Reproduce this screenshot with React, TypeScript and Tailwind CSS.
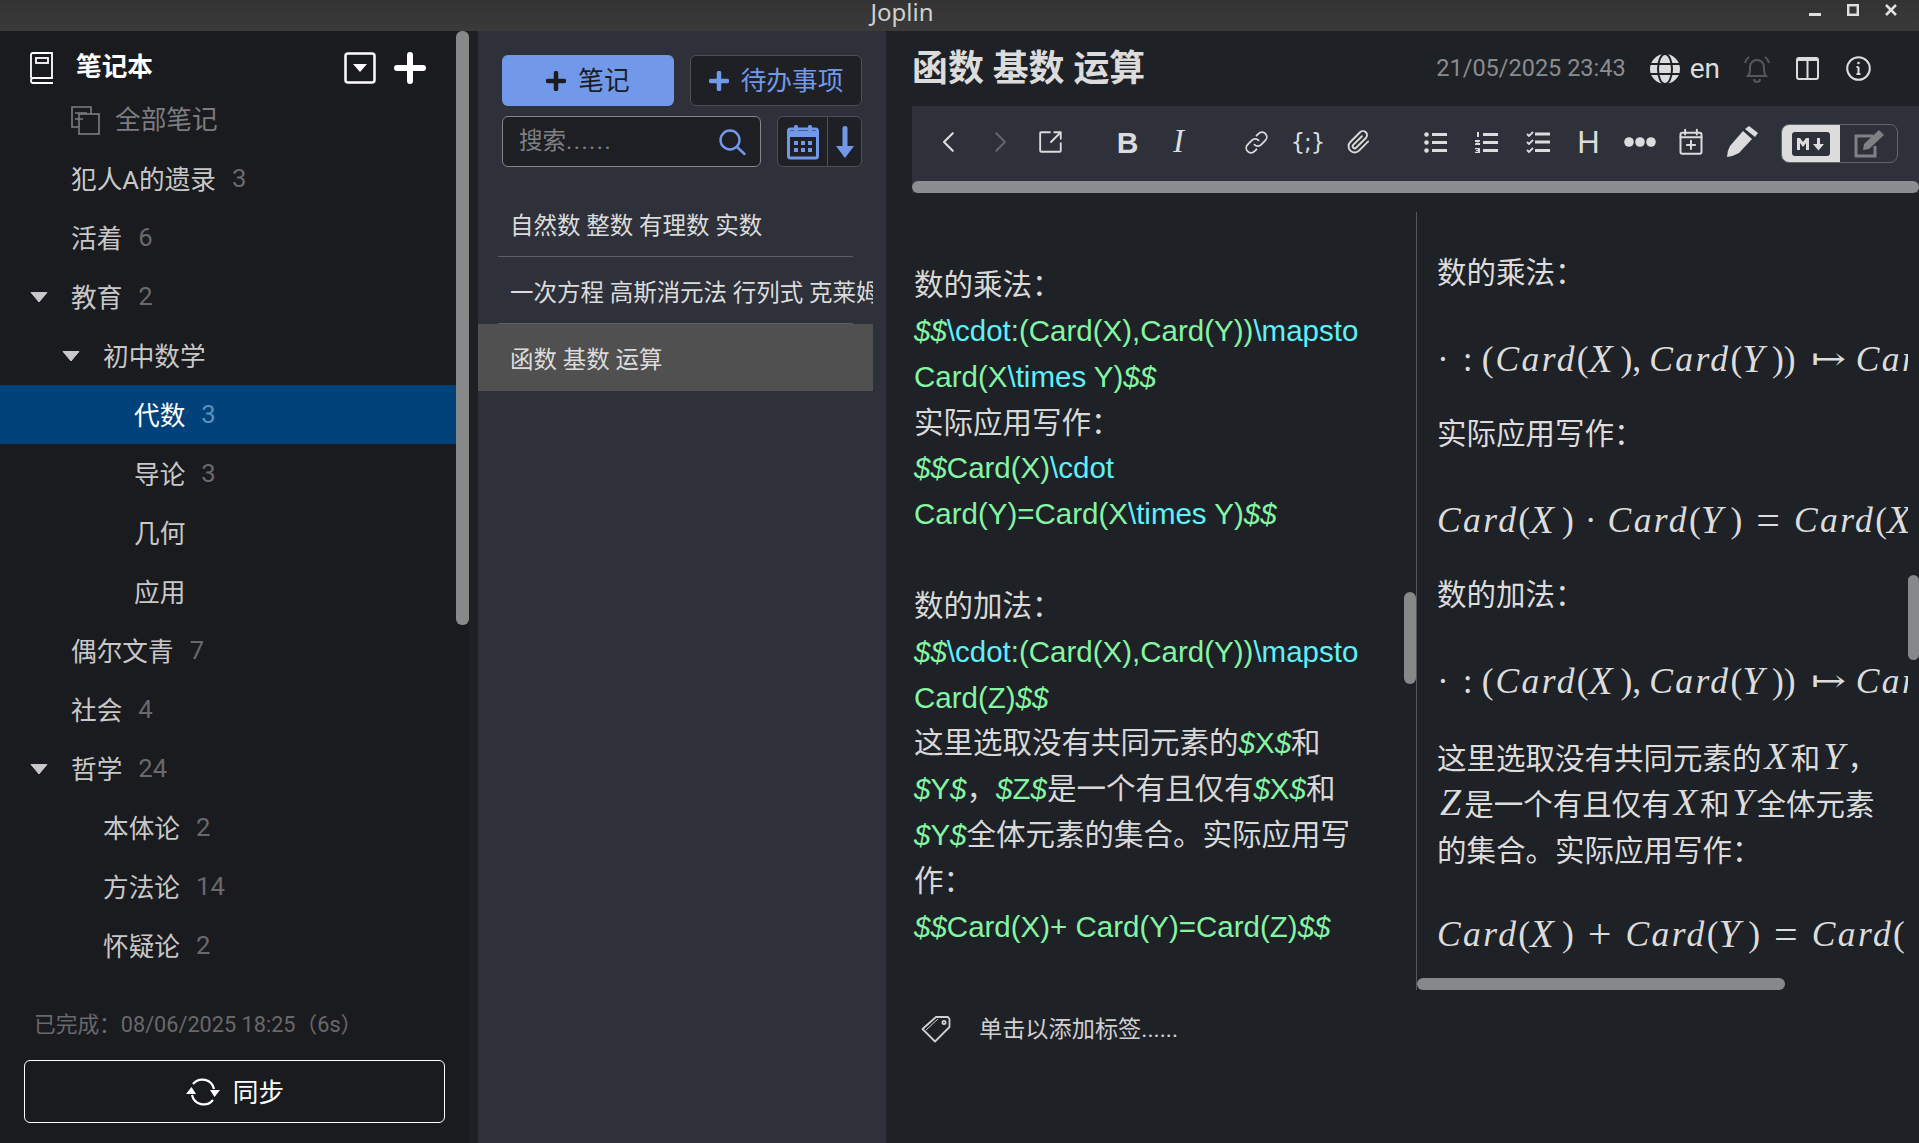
import type { ReactNode } from "react";

const folders = [
  { name: "犯人A的遗录", count: "3", pad: "pl-[30px]" },
  { name: "活着", count: "6", pad: "pl-[30px]" },
  { name: "教育", count: "2", pad: "pl-[30px]", open: true },
  { name: "初中数学", pad: "pl-[62px]", open: true },
  { name: "代数", count: "3", pad: "pl-[93px]", selected: true },
  { name: "导论", count: "3", pad: "pl-[93px]" },
  { name: "几何", pad: "pl-[93px]" },
  { name: "应用", pad: "pl-[93px]" },
  { name: "偶尔文青", count: "7", pad: "pl-[30px]" },
  { name: "社会", count: "4", pad: "pl-[30px]" },
  { name: "哲学", count: "24", pad: "pl-[30px]", open: true },
  { name: "本体论", count: "2", pad: "pl-[62px]" },
  { name: "方法论", count: "14", pad: "pl-[62px]" },
  { name: "怀疑论", count: "2", pad: "pl-[62px]" },
];

function Caret() {
  return (
    <svg width="18" height="12" viewBox="0 0 18 12" className="text-[#c8c8c8]">
      <path d="M1 1.500h16L9 11z" fill="currentColor" stroke="currentColor" strokeLinejoin="round" />
    </svg>
  );
}

function Icon({ children, size = 26, vb = 24 }: { children: ReactNode; size?: number; vb?: number }) {
  return (
    <svg
      width={size}
      height={size}
      viewBox={`0 0 ${vb} ${vb}`}
      fill="none"
      stroke="currentColor"
      strokeWidth="1.7"
      strokeLinecap="round"
      strokeLinejoin="round"
    >
      {children}
    </svg>
  );
}

function ToolBtn({ children, dim }: { children: ReactNode; dim?: boolean }) {
  return (
    <div className={`flex h-[51px] w-[51px] items-center justify-center ${dim ? "text-[#62646a]" : "text-[#dcdcdc]"}`}>
      {children}
    </div>
  );
}

function Sidebar() {
  return (
    <div className="relative flex h-full w-[478px] shrink-0 flex-col bg-[#1a1b1f]">
      <div className="absolute right-[9px] top-0 h-[594px] w-[13px] rounded-[6px] bg-[#87888a]" />
      <div className="absolute right-0 top-0 h-full w-[9px] bg-[#1e2024]" />
      <div className="flex h-[59px] items-center pl-[30px] pr-[52px] pt-[14px] text-white">
        <svg width="24" height="32" viewBox="0 0 24 32" fill="none" stroke="currentColor" strokeWidth="1.8">
          <path d="M1 26V3q0-2 2-2h19v25H3q-2 0-2 2.500T3 31h20" />
          <rect x="6" y="6" width="12" height="5" />
        </svg>
        <span className="ml-[22px] text-[25.67px] font-bold">笔记本</span>
        <div className="ml-auto flex items-center gap-[18px]">
          <svg width="32" height="32" viewBox="0 0 32 32" fill="none">
            <rect x="1.500" y="1.500" width="29" height="29" rx="2.500" stroke="currentColor" strokeWidth="2.500" />
            <path d="M9 12h14l-7 8z" fill="currentColor" />
          </svg>
          <svg width="32" height="32" viewBox="0 0 32 32" fill="none" stroke="currentColor" strokeWidth="6" strokeLinecap="round">
            <path d="M16 3v26M3 16h26" />
          </svg>
        </div>
      </div>
      <div className="flex h-[59px] items-center pl-[71px] pt-[2px] text-[#7b7d80]">
        <svg width="29" height="29" viewBox="0 0 29 29" fill="none" stroke="currentColor" strokeWidth="1.600">
          <path d="M20 8V1H1v20h7" />
          <rect x="8" y="8" width="20" height="20" />
          <path d="M4 7h12M4 13h8" />
        </svg>
        <span className="ml-[15px] text-[25.67px]">全部笔记</span>
      </div>
      {folders.map((f) => (
        <div
          key={f.name}
          className={`flex h-[59px] w-[456px] shrink-0 items-center ${f.pad} ${f.selected ? "bg-[#01427b] text-white" : "text-[#c8c8c8]"}`}
        >
          <span className="flex w-[41px] items-center">{f.open && <Caret />}</span>
          <span className="pt-[4px] text-[25.67px]">{f.name}</span>
          {f.count && (
            <span className={`ml-[16px] text-[25.67px] ${f.selected ? "text-[#5d8fbc]" : "text-[#68696c]"}`}>
              {f.count}
            </span>
          )}
        </div>
      ))}
      <div className="mt-auto pb-[20px] pl-[24px]">
        <div className="whitespace-nowrap pl-[10px] text-[21.7px] text-[#68696b]">已完成：08/06/2025 18:25（6s）</div>
        <div className="mt-[18px] flex h-[63px] w-[421px] items-center justify-center gap-[12px] rounded-[6px] border-[1.5px] border-white text-white">
          <svg width="36" height="32" viewBox="0 0 36 32" fill="none" stroke="currentColor" strokeWidth="2.200">
            <path d="M7 19A12 12 0 0 0 28 24M29 13A12 12 0 0 0 8 8" />
            <path d="M1 18l5.500-7 4.500 7zM35 14l-5.500 7-4.500-7z" fill="currentColor" stroke="none" />
          </svg>
          <span className="pt-[3px] text-[25.67px]">同步</span>
        </div>
      </div>
    </div>
  );
}

function NoteList() {
  return (
    <div className="flex h-full w-[408px] shrink-0 flex-col bg-[#2e313a]">
      <div className="ml-[24px] mt-[24px] flex gap-[16px]">
        <div className="flex h-[51px] w-[172px] items-center justify-center gap-[12px] rounded-[6px] bg-[#7299e9] text-[#1b1c20]">
          <svg width="20" height="20" viewBox="0 0 20 20" stroke="currentColor" strokeWidth="4.500" strokeLinecap="round">
            <path d="M10 2v16M2 10h16" />
          </svg>
          <span className="pt-[2px] text-[25.67px]">笔记</span>
        </div>
        <div className="flex h-[51px] w-[172px] items-center justify-center gap-[12px] rounded-[6px] border border-[#4d4f55] bg-[#1e2026] text-[#7299e9]">
          <svg width="20" height="20" viewBox="0 0 20 20" stroke="currentColor" strokeWidth="4.500" strokeLinecap="round">
            <path d="M10 2v16M2 10h16" />
          </svg>
          <span className="pt-[2px] text-[25.67px]">待办事项</span>
        </div>
      </div>
      <div className="ml-[24px] mt-[10px] flex gap-[16px]">
        <div className="flex h-[51px] w-[259px] items-center justify-between rounded-[6px] border border-[#85868a] bg-[#1d1f24] pl-[16px] pr-[14px]">
          <span className="text-[23.5px] text-[#7f8083]">
            搜索<span className="tracking-[1.5px]">......</span>
          </span>
          <svg width="28" height="28" viewBox="0 0 28 28" fill="none" stroke="#7299e9" strokeWidth="2.400" strokeLinecap="round">
            <circle cx="12" cy="12" r="9.500" />
            <path d="M19 19l7.500 7" />
          </svg>
        </div>
        <div className="flex h-[51px] w-[85px] items-center rounded-[6px] border border-[#4d4f55] bg-[#1e2026]">
          <div className="flex h-full w-[50px] items-center justify-center border-r border-[#4d4f55]">
            <svg width="32" height="36" viewBox="0 0 32 36" fill="none">
              <rect x="1.500" y="5" width="29" height="29" rx="2" stroke="#7299e9" strokeWidth="3" />
              <path d="M1.500 7h29v6h-29z" fill="#7299e9" />
              <rect x="7" y="1" width="4" height="8" rx="1.500" fill="#7299e9" />
              <rect x="21" y="1" width="4" height="8" rx="1.500" fill="#7299e9" />
              <path d="M7 17h4v4H7zM14 17h4v4h-4zM21 17h4v4h-4zM7 24h4v4H7zM14 24h4v4h-4zM21 24h4v4h-4z" fill="#7299e9" />
            </svg>
          </div>
          <div className="flex flex-1 items-center justify-center">
            <svg width="18" height="32" viewBox="0 0 18 32" fill="#7299e9">
              <path d="M6.500 2q0-2 2.500-2t2.500 2v18H18l-9 12-9-12h6.500z" />
            </svg>
          </div>
        </div>
      </div>
      <div className="mt-[23px] w-[395px] overflow-hidden text-[23.47px] text-[#dcdcdc]">
        <div className="relative flex h-[67px] items-center whitespace-nowrap pl-[32px] pt-[6px]">
          自然数 整数 有理数 实数
          <div className="absolute bottom-0 left-[20px] h-px w-[355px] bg-[#5c5e63]" />
        </div>
        <div className="relative flex h-[67px] items-center whitespace-nowrap pl-[32px] pt-[6px]">
          一次方程 高斯消元法 行列式 克莱姆法则
          <div className="absolute bottom-0 left-[20px] h-px w-[355px] bg-[#5c5e63]" />
        </div>
        <div className="flex h-[67px] items-center whitespace-nowrap bg-[#505050] pl-[32px] pt-[6px]">函数 基数 运算</div>
      </div>
    </div>
  );
}

function G({ children }: { children: ReactNode }) {
  return <span className="text-[#84f5a2]">{children}</span>;
}
function C({ children }: { children: ReactNode }) {
  return <span className="text-[#5ef0fb]">{children}</span>;
}
function D() {
  return <span className="italic text-[#84f5a2]">$$</span>;
}
function S({ v }: { v: string }) {
  return (
    <span className="text-[#84f5a2]">
      <span className="italic">$</span>
      {v}
      <span className="italic">$</span>
    </span>
  );
}

function MarkdownPane() {
  return (
    <div className="relative h-full w-[504px] shrink-0 overflow-hidden whitespace-nowrap pl-[2px] pt-[50px] font-['Liberation_Sans','Noto_Sans_CJK_SC',sans-serif] text-[29.5px] leading-[45.85px] text-[#d8d8d8]">
      <div>数的乘法：</div>
      <div>
        <D /><C>\cdot</C><G>:(Card(X),Card(Y))</G><C>\mapsto</C>
      </div>
      <div>
        <G>Card(X</G><C>\times</C><G> Y)</G><D />
      </div>
      <div>实际应用写作：</div>
      <div>
        <D /><G>Card(X)</G><C>\cdot</C>
      </div>
      <div>
        <G>Card(Y)=Card(X</G><C>\times</C><G> Y)</G><D />
      </div>
      <div className="h-[45.85px]" />
      <div>数的加法：</div>
      <div>
        <D /><C>\cdot</C><G>:(Card(X),Card(Y))</G><C>\mapsto</C>
      </div>
      <div>
        <G>Card(Z)</G><D />
      </div>
      <div>
        这里选取没有共同元素的<S v="X" />和
      </div>
      <div>
        <S v="Y" />，<S v="Z" />是一个有且仅有<S v="X" />和
      </div>
      <div>
        <S v="Y" />全体元素的集合。实际应用写
      </div>
      <div>作：</div>
      <div>
        <D /><G>Card(X)+ Card(Y)=Card(Z)</G><D />
      </div>
      <div className="absolute right-0 top-[380px] h-[92px] w-[12px] rounded-[6px] bg-[#87888a]" />
    </div>
  );
}

function V({ children }: { children: ReactNode }) {
  return <i className="px-[3px] font-['Liberation_Serif',serif] text-[38px] leading-none">{children}</i>;
}

function CardOf({ v }: { v?: string }) {
  return (
    <>
      <i className="tracking-[2.4px]">Card</i>
      <span>(</span>
      {v && (
        <>
          <i className="pr-[8px] text-[39px]">{v}</i>
          <span>)</span>
        </>
      )}
    </>
  );
}

function MathLine({ children, last }: { children: ReactNode; last?: boolean }) {
  return (
    <div className={`flex h-[54px] items-center whitespace-nowrap font-['Liberation_Serif',serif] text-[35.5px] text-[#dcdcdc] ${last ? "mb-0 mt-[33px]" : "mb-[25px] mt-[36px]"}`}>
      {children}
    </div>
  );
}

function Op({ children }: { children: ReactNode }) {
  return <span className="mx-[14px] text-[42px] leading-none">{children}</span>;
}

function MapHead() {
  return (
    <>
      <span className="mr-[14px]">·</span>
      <span className="mr-[9px]">:</span>
      <span className="mr-[2px]">(</span>
      <CardOf v="X" />
      <span className="mr-[8px]">,</span>
      <CardOf v="Y" />
      <span>)</span>
      <span className="ml-[15px] mr-[20px] inline-block w-[33px] origin-left scale-x-[1.4] font-['DejaVu_Serif',serif] text-[30px] leading-none">↦</span>
    </>
  );
}

function RenderedPane() {
  return (
    <div className="relative h-full flex-1 overflow-hidden border-l border-[#55575b] pt-[38px] text-[29.5px] leading-[46px] text-[#dcdcdc]">
      <div className="w-[491px] overflow-hidden pl-[20px]">
        <div>数的乘法：</div>
        <MathLine>
          <MapHead />
          <CardOf v="X" />
        </MathLine>
        <div>实际应用写作：</div>
        <MathLine>
          <CardOf v="X" />
          <span className="mx-[11px]">·</span>
          <CardOf v="Y" />
          <Op>=</Op>
          <CardOf v="X" />
        </MathLine>
        <div className="whitespace-nowrap">数的加法：</div>
        <MathLine>
          <MapHead />
          <CardOf v="Z" />
        </MathLine>
        <div className="whitespace-nowrap pt-[3px]">
          这里选取没有共同元素的<V>X</V>和<V>Y</V>，
        </div>
        <div className="whitespace-nowrap">
          <V>Z</V>是一个有且仅有<V>X</V>和<V>Y</V>全体元素
        </div>
        <div className="whitespace-nowrap">的集合。实际应用写作：</div>
        <MathLine last>
          <CardOf v="X" />
          <Op>+</Op>
          <CardOf v="Y" />
          <Op>=</Op>
          <CardOf />
        </MathLine>
      </div>
      <div className="absolute bottom-0 left-0 h-[12px] w-[368px] rounded-[6px] bg-[#87888a]" />
      <div className="absolute right-0 top-[363px] h-[85px] w-[11px] rounded-[6px] bg-[#87888a]" />
    </div>
  );
}

function Toolbar() {
  return (
    <div className="relative h-[87px] shrink-0 bg-[#2e313a]">
      <div className="flex h-[72px] items-center pl-[11px]">
        <ToolBtn>
          <Icon size={30}><path d="M15 5l-7 7 7 7" /></Icon>
        </ToolBtn>
        <ToolBtn dim>
          <Icon size={30}><path d="M9 5l7 7-7 7" /></Icon>
        </ToolBtn>
        <ToolBtn>
          <Icon size={26}>
            <path d="M11 3H3q-1 0-1 1v16q0 1 1 1h17q1 0 1-1v-7" />
            <path d="M12 12l9-9M15 3h6v6" />
          </Icon>
        </ToolBtn>
        <div className="w-[26px]" />
        <ToolBtn>
          <span className="font-['Liberation_Sans',sans-serif] text-[30px] font-bold">B</span>
        </ToolBtn>
        <ToolBtn>
          <span className="font-['Liberation_Serif',serif] text-[33px] italic">I</span>
        </ToolBtn>
        <div className="w-[27px]" />
        <ToolBtn>
          <Icon size={25}>
            <path d="M10 14a4.500 4.500 0 0 0 6.500 0l4-4a4.500 4.500 0 0 0-6.500-6.500l-2 2" />
            <path d="M14 10a4.500 4.500 0 0 0-6.500 0l-4 4a4.500 4.500 0 0 0 6.500 6.500l2-2" />
          </Icon>
        </ToolBtn>
        <ToolBtn>
          <span className="font-['DejaVu_Sans',sans-serif] text-[23px] tracking-[-1px]">{"{;}"}</span>
        </ToolBtn>
        <ToolBtn>
          <Icon size={26}>
            <path d="M20.500 11.500l-8.500 8.500a5.500 5.500 0 0 1-8-8l9-9a3.700 3.700 0 0 1 5.300 5.300l-9 9a1.800 1.800 0 0 1-2.600-2.600l8-8" />
          </Icon>
        </ToolBtn>
        <div className="w-[26px]" />
        <ToolBtn>
          <svg width="24" height="21" viewBox="0 0 24 21" fill="currentColor">
            <circle cx="2.500" cy="2.500" r="2.300" /><circle cx="2.500" cy="10.500" r="2.300" /><circle cx="2.500" cy="18.500" r="2.300" />
            <path d="M8 1h15v3H8zM8 9h15v3H8zM8 17h15v3H8z" />
          </svg>
        </ToolBtn>
        <ToolBtn>
          <svg width="24" height="23" viewBox="0 0 24 23" fill="currentColor">
            <path d="M8 2h15v3H8zM8 10h15v3H8zM8 18h15v3H8z" />
            <path d="M2 1h2v5H2zM0 9h5v1.500L2 12h3v2H0v-1.500L3 11H0zM0 17h5v5H0v-1.300h3v-.700H1v-1h2v-.700H0z" />
          </svg>
        </ToolBtn>
        <ToolBtn>
          <svg width="24" height="23" viewBox="0 0 24 23" fill="none" stroke="currentColor">
            <path d="M1 3l2 2 4-4M1 11l2 2 4-4M1 19l2 2 4-4" strokeWidth="1.800" />
            <path d="M9 1.500h15v3H9zM9 9.500h15v3H9zM9 18h15v3H9z" fill="currentColor" stroke="none" />
          </svg>
        </ToolBtn>
        <ToolBtn>
          <span className="pt-[2px] font-['Liberation_Sans',sans-serif] text-[31px]">H</span>
        </ToolBtn>
        <ToolBtn>
          <svg width="32" height="10" viewBox="0 0 32 10" fill="currentColor">
            <circle cx="5" cy="5" r="4.800" /><circle cx="16" cy="5" r="4.800" /><circle cx="27" cy="5" r="4.800" />
          </svg>
        </ToolBtn>
        <ToolBtn>
          <Icon size={28}>
            <rect x="3" y="4" width="18" height="18" rx="1.500" />
            <path d="M7 1.500v4M17 1.500v4M3 8h18M12 11v7M8.500 14.500h7" />
          </Icon>
        </ToolBtn>
        <ToolBtn>
          <svg width="32" height="32" viewBox="0 0 32 32" fill="currentColor">
            <path d="M1 31q0-6 3-11L17 5l9 8-13 14q-5 3-12 4z" />
            <path d="M19 3l4-3 9 7-3 4z" />
          </svg>
        </ToolBtn>
        <div className="ml-[14px] mt-[3px] flex h-[39px] w-[117px] overflow-hidden rounded-[8px] border border-[#62646a]">
          <div className="flex w-[58px] items-center justify-center bg-[#dcdcdc] text-[#2e313a]">
            <svg width="38" height="24" viewBox="0 0 38 24">
              <rect width="38" height="24" rx="3" fill="currentColor" />
              <path d="M5 18V6h3l3 4 3-4h3v12h-3v-7l-3 4-3-4v7zM25 6h3v6h4l-5.500 6.500L21 12h4z" fill="#dcdcdc" />
            </svg>
          </div>
          <div className="flex flex-1 items-center justify-center text-[#808185]">
            <svg width="32" height="30" viewBox="0 0 32 30" fill="none">
              <path d="M20 7H3v20h19V17" stroke="currentColor" strokeWidth="3" />
              <path d="M11 15L26 1l5 5-15 14-6 1z" fill="currentColor" />
            </svg>
          </div>
        </div>
      </div>
      <div className="absolute bottom-0 left-0 right-0 h-[12px] rounded-[6px] bg-[#8c8d90]" />
    </div>
  );
}

function Editor() {
  return (
    <div className="flex h-full flex-1 flex-col bg-[#1e2126] pl-[26px]">
      <div className="flex h-[75px] shrink-0 items-center pr-[48px]">
        <h1 className="pt-[2px] text-[35.9px] font-bold text-[#dcdcdc]">函数 基数 运算</h1>
        <span className="ml-auto text-[23.5px] text-[#8a8c8f]">21/05/2025 23:43</span>
        <svg className="ml-[23px] text-[#dcdcdc]" width="32" height="32" viewBox="0 0 32 32" fill="none" stroke="currentColor">
          <circle cx="16" cy="16" r="15" fill="currentColor" stroke="none" />
          <ellipse cx="16" cy="16" rx="7" ry="15" stroke="#1e2126" strokeWidth="2" />
          <path d="M1 11h30M1 21h30" stroke="#1e2126" strokeWidth="2" />
        </svg>
        <span className="ml-[9px] text-[28px] text-[#dcdcdc]">en</span>
        <svg className="ml-[24px] text-[#55575b]" width="26" height="28" viewBox="0 0 26 28" fill="none" stroke="currentColor" strokeWidth="2">
          <path d="M4 21q2-2 2-6v-3a7 7 0 0 1 14 0v3q0 4 2 6H4zM10 24a3 3 0 0 0 6 0M1 8q1-4 4-6M25 8q-1-4-4-6" />
        </svg>
        <svg className="ml-[26px] text-[#dcdcdc]" width="23" height="23" viewBox="0 0 23 23" fill="none" stroke="currentColor" strokeWidth="2">
          <rect x="1" y="1" width="21" height="21" rx="2" />
          <path d="M11.500 1v21" />
          <path d="M1 1h21v3H1z" fill="currentColor" stroke="none" />
        </svg>
        <svg className="ml-[27px] text-[#dcdcdc]" width="25" height="25" viewBox="0 0 25 25" fill="none" stroke="currentColor" strokeWidth="2">
          <circle cx="12.500" cy="12.500" r="11.300" />
          <path d="M12.500 11v7M10.500 18h4M10.500 11h2" />
          <circle cx="12.500" cy="7" r="1.300" fill="currentColor" stroke="none" />
        </svg>
      </div>
      <Toolbar />
      <div className="mt-[19px] flex h-[778px] shrink-0">
        <MarkdownPane />
        <RenderedPane />
      </div>
      <div className="mt-[22px] flex items-center pl-[9px] text-[#d0d0d0]">
        <svg width="30" height="28" viewBox="0 0 30 28" fill="none" stroke="currentColor" strokeWidth="1.800" strokeLinejoin="round">
          <path d="M1.500 14L15 2h12l1.500 2v8L14 26.500z" />
          <path d="M5 15L17 4M14 26.500q6-6 14.500-14.500" strokeWidth="1" />
          <circle cx="23" cy="7.500" r="1.600" />
        </svg>
        <span className="ml-[28px] text-[23.2px]">单击以添加标签......</span>
      </div>
    </div>
  );
}

export default function App() {
  return (
    <div className="flex h-screen w-full flex-col overflow-hidden bg-[#1e2126] font-['Roboto','Noto_Sans_CJK_SC',sans-serif]">
      <div className="relative flex h-[31px] shrink-0 items-center justify-center bg-linear-to-b from-[#333333] to-[#3a3a3a]">
        <span className="relative -top-[4px] mr-[115px] font-['Noto_Sans',sans-serif] text-[24px] text-[#d0d0d0]">Joplin</span>
        <div className="absolute right-[22px] top-[4px] flex items-center gap-[26px] text-[#e0e0e0]">
          <svg width="12" height="12" viewBox="0 0 12 12" fill="currentColor"><path d="M0 9h12v3H0z" /></svg>
          <svg width="12" height="12" viewBox="0 0 12 12" fill="none" stroke="currentColor" strokeWidth="2.500"><rect x="1.200" y="1.200" width="9.600" height="9.600" /></svg>
          <svg width="12" height="12" viewBox="0 0 12 12" fill="none" stroke="currentColor" strokeWidth="2.500"><path d="M1 1l10 10M11 1L1 11" /></svg>
        </div>
      </div>
      <div className="flex min-h-0 flex-1">
        <Sidebar />
        <NoteList />
        <Editor />
      </div>
    </div>
  );
}
